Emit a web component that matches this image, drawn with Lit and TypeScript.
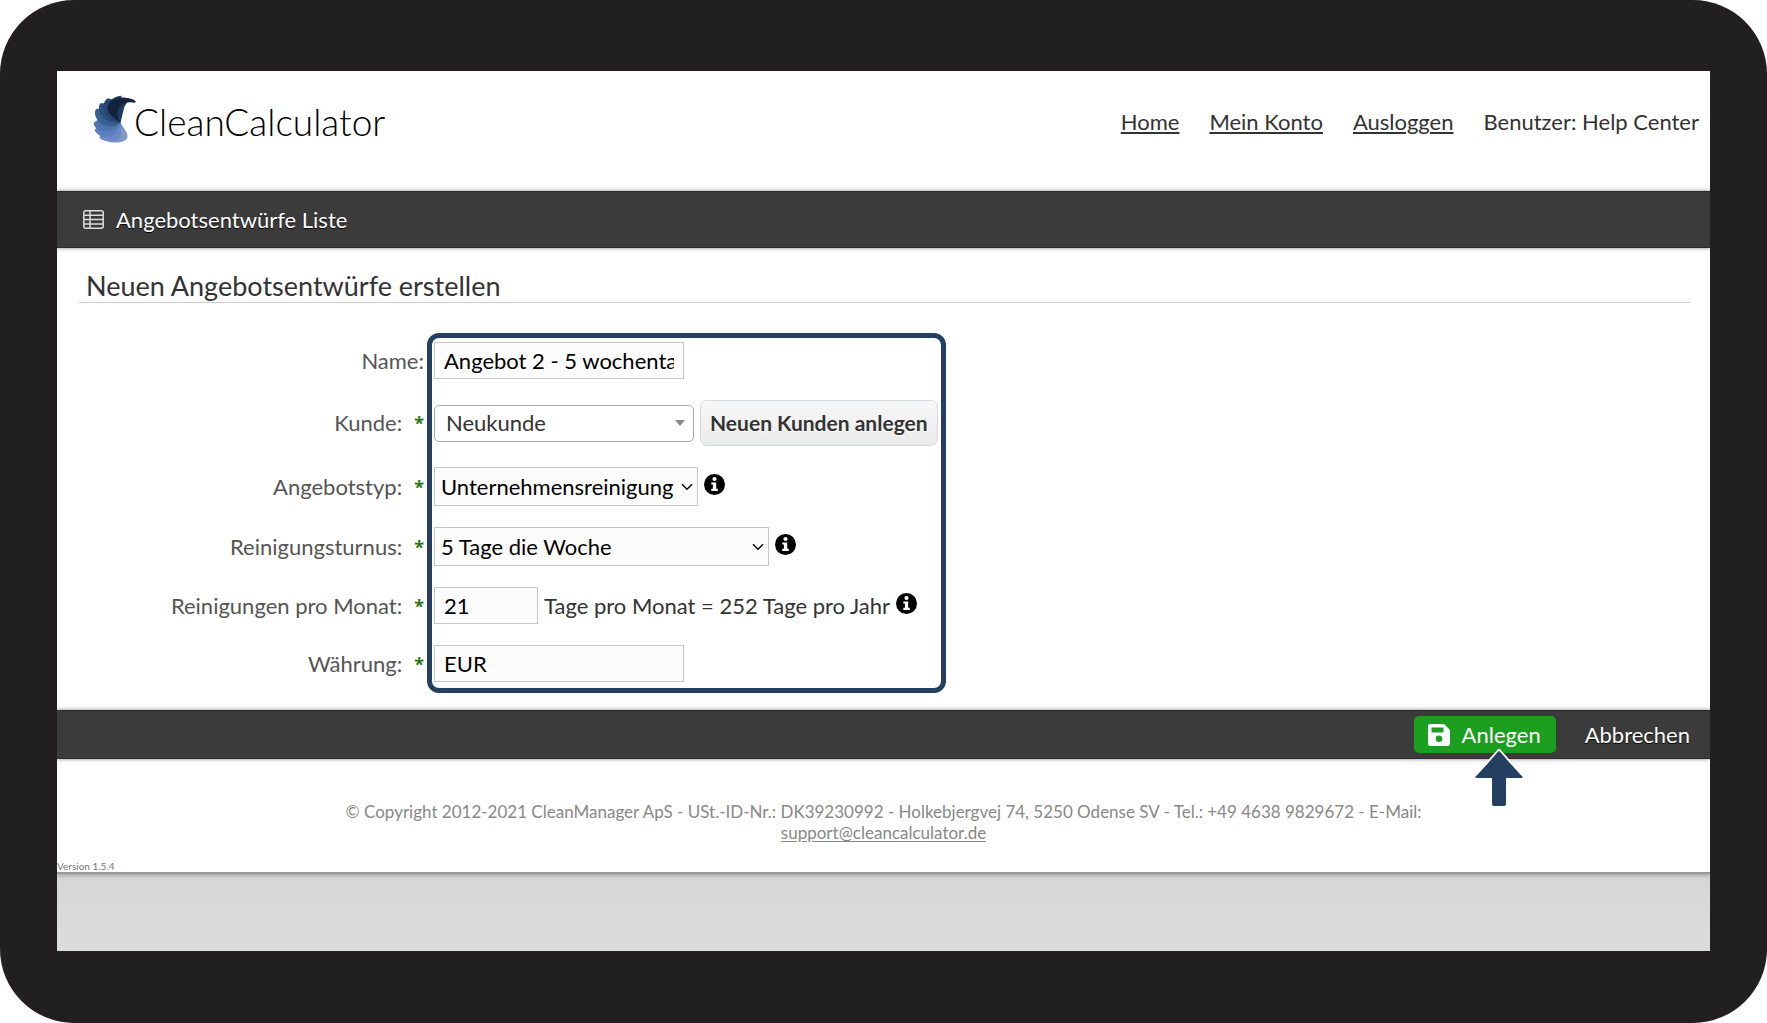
import { LitElement, html, css, svg } from "lit";
import { customElement, property } from "lit/decorators.js";

/** Round black info badge shown after a field. */
@customElement("info-button")
export class InfoButton extends LitElement {
  @property() label = "Info";

  static styles = css`
    :host {
      display: inline-flex;
    }
    .info {
      display: flex;
      padding: 0;
      border: 0;
      background: none;
      cursor: pointer;
    }
  `;

  render() {
    return html`<button class="info" type="button" aria-label=${this.label}>
      <svg width="21" height="21" viewBox="0 0 21 21" aria-hidden="true">
        <circle cx="10.5" cy="10.5" r="10.5" fill="#000" />
        <circle cx="10.5" cy="5" r="2.1" fill="#fff" />
        <path d="M7.3 8.4h4.9v6.4h1.6v2.2H7.3v-2.2h1.6v-4.2H7.3z" fill="#fff" />
      </svg>
    </button>`;
  }
}

const chevron = svg`<svg class="caret" width="12" height="8" viewBox="0 0 12 8" aria-hidden="true">
  <path d="M1 1.2 6 6.2 11 1.2" fill="none" stroke="#000" stroke-width="1.4" />
</svg>`;

const triangle = svg`<svg class="caret" width="12" height="8" viewBox="0 0 12 8" aria-hidden="true">
  <path d="M1 1h10L6 7z" fill="#888" />
</svg>`;

@customElement("app-root")
export class AppRoot extends LitElement {
  static styles = css`
    :host {
      display: block;
      font-family: Lato, "Open Sans", sans-serif;
      font-size: 22px;
      line-height: 28px;
      color: #333;
    }
    * {
      box-sizing: border-box;
    }
    a {
      color: inherit;
      text-underline-offset: 2px;
    }
    .bezel {
      display: flex;
      min-height: 100vh;
      padding: 71px 57px 72px;
      border-radius: 74px;
      background: #221f20;
    }
    .screen {
      flex: 1;
      min-width: 0;
      overflow: hidden;
      background: linear-gradient(#d6d6d6 800px, #dcdcdc);
    }
    .page {
      background: #fff;
      border-bottom: 2px solid #999;
      box-shadow: 0 1px 4px rgba(0, 0, 0, 0.3);
    }
    .header {
      display: flex;
      justify-content: space-between;
      align-items: flex-start;
      padding: 24px 11px 0 36px;
      height: 120px;
    }
    .logo {
      display: flex;
      align-items: flex-start;
      text-decoration: none;
      color: #000;
    }
    .wordmark {
      margin-left: -2px;
      font-size: 37px;
      font-weight: 300;
      line-height: 53px;
    }
    .nav {
      display: flex;
      gap: 30px;
      line-height: 54px;
    }
    .bar {
      display: flex;
      align-items: center;
      position: relative;
      background: #3b3b3b;
      color: #fff;
      border: solid #2b2b2b;
      border-width: 1px 0;
      box-shadow: 0 0 4px rgba(0, 0, 0, 0.5);
    }
    .bar-top {
      height: 57px;
      padding: 0 26px;
    }
    .bar-bottom {
      height: 49px;
      justify-content: flex-end;
      gap: 29px;
      padding: 0 20px;
    }
    .list-link {
      display: flex;
      align-items: center;
      gap: 12px;
      text-decoration: none;
      text-shadow: 0 1px 1px #000;
    }
    .content {
      padding: 21px 20px 17px 22px;
    }
    .title {
      margin: 0;
      padding: 0 7px;
      border-bottom: 1px solid #ccc;
      font-size: 27px;
      font-weight: 400;
      line-height: 33px;
    }
    .form {
      display: grid;
      grid-template-columns: minmax(0, 348px) max-content;
      row-gap: 21px;
      margin-top: 30px;
    }
    .frame {
      grid-column: 2;
      grid-row: 1 / 7;
      border: 5px solid #253f63;
      border-radius: 12px;
      pointer-events: none;
    }
    .label {
      grid-column: 1;
      display: flex;
      justify-content: flex-end;
      align-items: center;
      gap: 12px;
      padding-right: 3px;
      color: #555;
    }
    .star {
      color: #2e7511;
      font-family: "Open Sans", sans-serif;
      font-size: 18px;
      font-weight: 700;
    }
    .cell {
      grid-column: 2;
      display: flex;
      align-items: center;
      gap: 6px;
      padding: 0 8px 0 7px;
    }
    .r1 {
      grid-row: 1;
      padding-top: 9px;
    }
    .r2 {
      grid-row: 2;
    }
    .r3 {
      grid-row: 3;
    }
    .r4 {
      grid-row: 4;
    }
    .r5 {
      grid-row: 5;
    }
    .r6 {
      grid-row: 6;
      padding-bottom: 11px;
    }
    .input {
      width: 250px;
      height: 37px;
      padding: 0 9px;
      border: 1px solid #c6c6c6;
      border-radius: 0;
      background: #fcfcfc;
      color: #000;
      font: inherit;
    }
    .short {
      width: 104px;
    }
    .pick {
      display: inline-grid;
      align-items: center;
    }
    .select {
      grid-area: 1 / 1;
      appearance: none;
      width: 264px;
      height: 39px;
      padding: 0 18px 0 6px;
      border: 1px solid #c6c6c6;
      border-radius: 0;
      background: #fcfcfc;
      color: #000;
      font: inherit;
    }
    .long {
      width: 335px;
    }
    .rounded {
      width: 260px;
      height: 37px;
      padding-left: 11px;
      border-color: #aaa;
      border-radius: 5px;
      background: #fff;
      color: #333;
    }
    .caret {
      grid-area: 1 / 1;
      justify-self: end;
      margin-right: 5px;
      pointer-events: none;
    }
    .rounded + .caret {
      margin-right: 8px;
    }
    .info {
      margin-bottom: 5px;
    }
    .new-customer {
      height: 46px;
      padding: 0 9px;
      border: 1px solid #d3d9de;
      border-radius: 7px;
      background: linear-gradient(#f8f8f8, #eaeaea);
      color: #333;
      font: inherit;
      font-size: 21px;
      font-weight: 700;
      text-shadow: 0 1px 0 #fff;
    }
    .submit-wrap {
      position: relative;
      display: flex;
    }
    .submit {
      display: flex;
      align-items: center;
      gap: 12px;
      height: 37px;
      padding: 0 15px 0 14px;
      border: 0;
      border-radius: 5px;
      background: #1c9e1e;
      color: #fff;
      font: inherit;
    }
    .cancel {
      text-decoration: none;
      text-shadow: 0 1px 1px #000;
    }
    .pointer {
      position: absolute;
      left: 60px;
      top: 32px;
      z-index: 1;
    }
    .footer {
      padding: 42px 270px 17px;
      color: #888;
      font-size: 17px;
      line-height: 21px;
      text-align: center;
    }
    .version {
      margin: 0;
      color: #777;
      font-size: 10px;
      line-height: 12px;
    }
  `;

  private logo() {
    return svg`<svg width="43" height="48" viewBox="0 0 128 145" aria-hidden="true">
      <path d="M82 83C92 102 110 118 101 132 90 147 50 146 42 138L50 100Z" fill="#8099cb" />
      <path d="M82 83C86 105 88 128 76 136 56 145 24 140 18 127L40 95Z" fill="#6d8ac6" />
      <path d="M82 83C78 108 64 126 44 127 22 128 6 116 4 104L30 84Z" fill="#5c7fbf" />
      <path d="M82 83C72 102 52 114 30 109 10 104 0 95 1 84L20 70Z" fill="#4d76b0" />
      <path d="M82 83C66 98 42 98 24 86 4 72 2 52 8 42L30 40Z" fill="#35618f" />
      <path d="M82 83C60 88 34 78 24 62 14 45 16 30 22 25L50 25Z" fill="#2c4f7f" />
      <path d="M82 83C60 80 36 66 32 50 28 30 34 14 44 10L60 14 100 12Z" fill="#27466f" />
      <path d="M82 83C58 70 38 54 44 34 50 12 68 2 86 2L82 12 108 14 90 40Z" fill="#1f3b60" />
      <path d="M82 83C66 70 40 56 43 38 48 14 72 7 96 8 112 9 128 14 128 22 126 25 120 23 112 22 92 20 72 38 72 56 73 68 77 76 82 83Z" fill="#13233b" />
    </svg>`;
  }

  render() {
    return html`
      <div class="bezel">
        <div class="screen">
          <div class="page">
            <header class="header">
              <a class="logo" href="#">
                ${this.logo()}
                <span class="wordmark">CleanCalculator</span>
              </a>
              <nav class="nav">
                <a href="#home">Home</a>
                <a href="#konto">Mein Konto</a>
                <a href="#logout">Ausloggen</a>
                <span>Benutzer: Help Center</span>
              </nav>
            </header>

            <div class="bar bar-top">
              <a class="list-link" href="#liste">
                <svg width="21" height="19" viewBox="0 0 21 19" fill="none" stroke="#ddd" stroke-width="1.5" aria-hidden="true">
                  <rect x=".8" y=".8" width="19.4" height="17.4" rx="2" />
                  <path d="M1 5.3h19M1 9.6h19M1 13.9h19M7 1v17" />
                </svg>
                Angebotsentwürfe Liste
              </a>
            </div>

            <main class="content">
              <h1 class="title">Neuen Angebotsentwürfe erstellen</h1>
              <form class="form">
                <label class="label r1" for="name">Name:</label>
                <div class="cell r1">
                  <input class="input" id="name" type="text" value="Angebot 2 - 5 wochentage" />
                </div>

                <label class="label r2" for="kunde">Kunde: <span class="star">*</span></label>
                <div class="cell r2">
                  <span class="pick">
                    <select class="select rounded" id="kunde"><option>Neukunde</option></select>
                    ${triangle}
                  </span>
                  <button class="new-customer" type="button">Neuen Kunden anlegen</button>
                </div>

                <label class="label r3" for="typ">Angebotstyp: <span class="star">*</span></label>
                <div class="cell r3">
                  <span class="pick">
                    <select class="select" id="typ"><option>Unternehmensreinigung</option></select>
                    ${chevron}
                  </span>
                  <info-button class="info"></info-button>
                </div>

                <label class="label r4" for="turnus">Reinigungsturnus: <span class="star">*</span></label>
                <div class="cell r4">
                  <span class="pick">
                    <select class="select long" id="turnus"><option>5 Tage die Woche</option></select>
                    ${chevron}
                  </span>
                  <info-button class="info"></info-button>
                </div>

                <label class="label r5" for="monat">Reinigungen pro Monat: <span class="star">*</span></label>
                <div class="cell r5">
                  <input class="input short" id="monat" type="text" value="21" />
                  <span>Tage pro Monat = 252 Tage pro Jahr</span>
                  <info-button class="info"></info-button>
                </div>

                <label class="label r6" for="waehrung">Währung: <span class="star">*</span></label>
                <div class="cell r6">
                  <input class="input" id="waehrung" type="text" value="EUR" />
                </div>
                <div class="frame"></div>
              </form>
            </main>

            <div class="bar bar-bottom">
              <div class="submit-wrap">
                <button class="submit" type="button">
                  <svg width="22" height="22" viewBox="0 0 22 22" aria-hidden="true">
                    <path fill="#fff" fill-rule="evenodd" d="M2.5 0H16l6 6v13.500a2.500 2.500 0 0 1-2.500 2.500h-17A2.500 2.500 0 0 1 0 19.500v-17A2.500 2.500 0 0 1 2.500 0ZM3.500 3.500V8.500H15.500V3.500ZM11 11.500a3.300 3.300 0 1 0 0 6.600 3.300 3.300 0 0 0 0-6.600Z" />
                  </svg>
                  Anlegen
                </button>
                <svg class="pointer" width="50" height="58" viewBox="0 0 50 58" aria-hidden="true">
                  <path d="M2 28 25 3 48 28Q50 30 47 30H32V56Q32 58 30 58H20Q18 58 18 56V30H3Q0 30 2 28Z" fill="#253f63" />
                  <path d="M2 27 23.500 3Q25 1 26.500 3L48 27" fill="none" stroke="#fff" stroke-width="1.800" />
                </svg>
              </div>
              <a class="cancel" href="#abbrechen">Abbrechen</a>
            </div>

            <footer class="footer">
              © Copyright 2012-2021 CleanManager ApS - USt.-ID-Nr.: DK39230992 - Holkebjergvej 74, 5250
              Odense SV - Tel.: +49 4638 9829672 - E-Mail:
              <a href="mailto:support@cleancalculator.de">support@cleancalculator.de</a>
            </footer>
            <p class="version">Version 1.5.4</p>
          </div>
        </div>
      </div>
    `;
  }
}
